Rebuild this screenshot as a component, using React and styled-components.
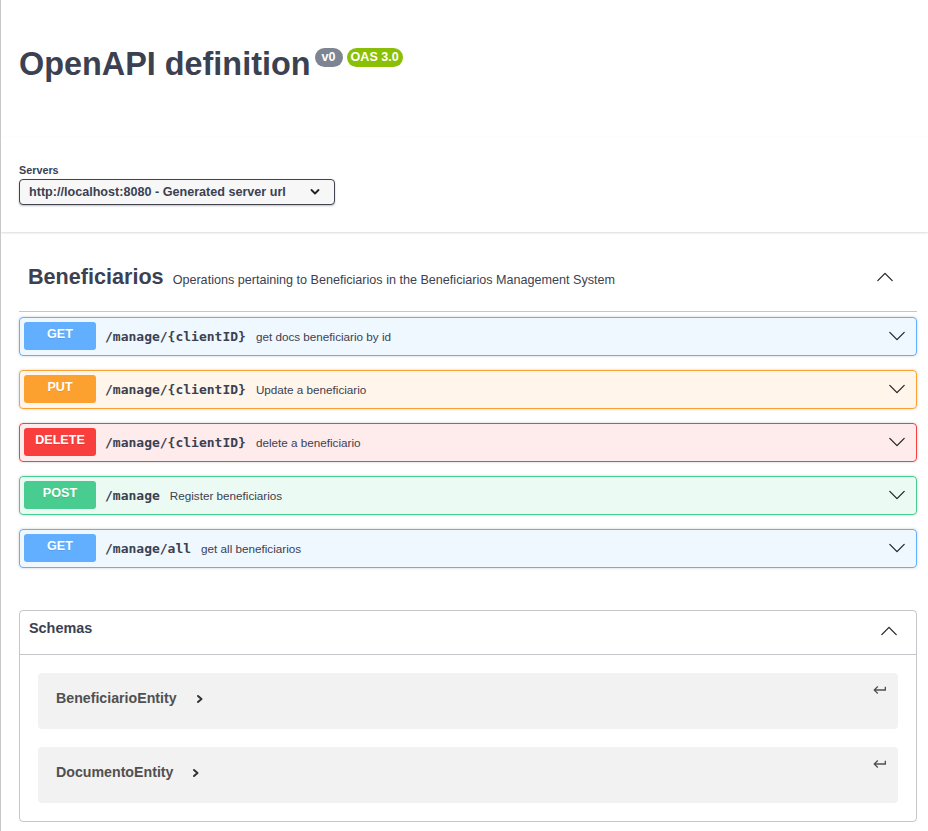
import React from "react";
import styled, { createGlobalStyle } from "styled-components";

const GlobalStyle = createGlobalStyle`
  html, body {
    margin: 0;
    padding: 0;
    background: #fff;
  }
  body {
    font-family: "Liberation Sans", Arial, sans-serif;
    color: #3b4151;
  }
  * {
    box-sizing: border-box;
  }
`;

const METHODS = {
  get: { color: "#61affe", bg: "rgba(97,175,254,.1)" },
  put: { color: "#fca130", bg: "rgba(252,161,48,.1)" },
  delete: { color: "#f93e3e", bg: "rgba(249,62,62,.1)" },
  post: { color: "#49cc90", bg: "rgba(73,204,144,.1)" },
};

const operations = [
  { method: "get", path: "/manage/{clientID}", summary: "get docs beneficiario by id" },
  { method: "put", path: "/manage/{clientID}", summary: "Update a beneficiario" },
  { method: "delete", path: "/manage/{clientID}", summary: "delete a beneficiario" },
  { method: "post", path: "/manage", summary: "Register beneficiarios" },
  { method: "get", path: "/manage/all", summary: "get all beneficiarios" },
];

const schemas = ["BeneficiarioEntity", "DocumentoEntity"];

function Chevron({ up, size = 18, width = 1.4, color = "#222" }) {
  return (
    <svg width={size} height={size} viewBox="0 0 20 20" fill="none">
      <polyline
        points={up ? "2,14 10,6 18,14" : "2,6 10,14 18,6"}
        stroke={color}
        strokeWidth={width}
        strokeLinecap="round"
        strokeLinejoin="round"
      />
    </svg>
  );
}

function JumpIcon() {
  return (
    <svg width="16" height="16" viewBox="0 0 24 24">
      <path
        d="M19 7v4H5.83l3.58-3.59L8 6l-6 6 6 6 1.41-1.41L5.83 13H21V7z"
        fill="#505050"
      />
    </svg>
  );
}

export default function App() {
  return (
    <Page>
      <GlobalStyle />
      <Wrapper>
        <Info>
          <TitleRow>
            <Title>OpenAPI definition</Title>
            <Badges>
              <Badge $wide>v0</Badge>
              <Badge $green>OAS 3.0</Badge>
            </Badges>
          </TitleRow>
        </Info>
      </Wrapper>

      <SchemeContainer>
        <Wrapper>
          <ServersTitle>Servers</ServersTitle>
          <Select>
            <span>http://localhost:8080 - Generated server url</span>
            <SelectArrow>
              <svg width="10" height="8" viewBox="0 0 10 8">
                <polyline
                  points="1.5,2 5,5.5 8.5,2"
                  fill="none"
                  stroke="#222"
                  strokeWidth="1.8"
                  strokeLinecap="round"
                  strokeLinejoin="round"
                />
              </svg>
            </SelectArrow>
          </Select>
        </Wrapper>
      </SchemeContainer>

      <Wrapper>
        <TagSection>
          <TagHeader>
            <TagText>
              <TagName>Beneficiarios</TagName>
              <TagDesc>
                Operations pertaining to Beneficiarios in the Beneficiarios
                Management System
              </TagDesc>
            </TagText>
            <Chevron up />
          </TagHeader>

          <OpList>
            {operations.map((op, i) => (
              <OpBlock key={i} $method={op.method}>
                <Method $method={op.method}>{op.method.toUpperCase()}</Method>
                <OpPath>{op.path}</OpPath>
                <OpSummary>{op.summary}</OpSummary>
                <Chevron />
              </OpBlock>
            ))}
          </OpList>
        </TagSection>

        <Models>
          <ModelsHeader>
            <ModelsTitle>Schemas</ModelsTitle>
            <HeaderArrow>
              <Chevron up />
            </HeaderArrow>
          </ModelsHeader>
          <ModelsBody>
            {schemas.map((name) => (
              <ModelContainer key={name}>
                <ModelName>
                  {name}
                  <Toggle>
                    <svg width="8" height="10" viewBox="0 0 8 10">
                      <polyline
                        points="2,2 5.5,5 2,8"
                        fill="none"
                        stroke="#333"
                        strokeWidth="2"
                        strokeLinecap="round"
                        strokeLinejoin="round"
                      />
                    </svg>
                  </Toggle>
                </ModelName>
                <JumpIcon />
              </ModelContainer>
            ))}
          </ModelsBody>
        </Models>
      </Wrapper>
    </Page>
  );
}

const Page = styled.div`
  min-height: 100vh;
  border-left: 1px solid #c9c9c9;
  overflow: hidden;
`;

const Wrapper = styled.div`
  width: 898px;
  margin-left: 18px;
`;

const Info = styled.div`
  padding: 48px 0 57px;
`;

const TitleRow = styled.div`
  display: flex;
  align-items: flex-start;
`;

const Title = styled.h1`
  margin: 0;
  font-size: 32.4px;
  line-height: 32.4px;
  font-weight: 700;
  color: #3b4151;
`;

const Badges = styled.div`
  display: flex;
  gap: 4px;
  margin-left: 4px;
`;

const Badge = styled.span`
  display: inline-block;
  height: 19px;
  line-height: 19px;
  padding: 0 ${(p) => (p.$wide ? "7px" : "4px")};
  border-radius: 57px;
  background: ${(p) => (p.$green ? "#89bf04" : "#7d8492")};
  color: #fff;
  font-size: 12.6px;
  font-weight: 700;
`;

const SchemeContainer = styled.div`
  padding: 27px 0;
  background: #fff;
  box-shadow: 0 1px 2px 0 rgba(0, 0, 0, 0.15);
`;

const ServersTitle = styled.div`
  font-size: 10.8px;
  line-height: 12px;
  font-weight: 700;
  margin-bottom: 3px;
`;

const Select = styled.div`
  width: 316px;
  height: 26px;
  display: flex;
  align-items: center;
  justify-content: space-between;
  padding: 0 14px 0 9px;
  border: 1px solid #41444e;
  border-radius: 4px;
  background: #f7f7f7;
  box-shadow: 0 1px 2px 0 rgba(0, 0, 0, 0.25);
  font-size: 12.6px;
  font-weight: 700;
  color: #3b4151;
`;

const SelectArrow = styled.span`
  display: flex;
`;

const TagSection = styled.div`
  margin-top: 11px;
`;

const TagHeader = styled.div`
  height: 69px;
  display: flex;
  align-items: center;
  padding: 0 23px 0 9px;
  border-bottom: 1px solid rgba(59, 65, 81, 0.3);
  margin-bottom: 4.5px;
`;

const TagText = styled.div`
  flex: 1;
  display: flex;
  align-items: baseline;
`;

const TagName = styled.span`
  font-size: 21.6px;
  font-weight: 700;
  color: #3b4151;
`;

const TagDesc = styled.span`
  font-size: 12.6px;
  padding: 0 9px;
  color: #3b4151;
`;

const OpList = styled.div`
  display: flex;
  flex-direction: column;
  gap: 14px;
`;

const OpBlock = styled.div`
  display: flex;
  align-items: center;
  padding: 4.5px 10.5px 4.5px 4px;
  border: 1px solid ${(p) => METHODS[p.$method].color};
  border-radius: 4px;
  background: ${(p) => METHODS[p.$method].bg};
  box-shadow: 0 0 3px rgba(0, 0, 0, 0.19);
`;

const Method = styled.span`
  min-width: 72px;
  height: 28px;
  padding-top: 5px;
  line-height: 15px;
  text-align: center;
  font-size: 12.6px;
  font-weight: 700;
  color: #fff;
  border-radius: 3px;
  background: ${(p) => METHODS[p.$method].color};
  text-shadow: 0 1px 0 rgba(0, 0, 0, 0.1);
`;

const OpPath = styled.span`
  font-family: "DejaVu Sans Mono", "Liberation Mono", monospace;
  font-size: 13px;
  font-weight: 700;
  padding: 0 10px 0 9px;
  color: #3b4151;
`;

const OpSummary = styled.span`
  flex: 1;
  font-size: 11.7px;
  color: #3b4151;
`;

const Models = styled.div`
  margin-top: 42px;
  border: 1px solid rgba(59, 65, 81, 0.3);
  border-radius: 4px;
`;

const ModelsHeader = styled.div`
  height: 44px;
  display: flex;
  align-items: flex-start;
  justify-content: space-between;
  padding: 9px 18px 0 9px;
  border-bottom: 1px solid rgba(59, 65, 81, 0.3);
`;

const ModelsTitle = styled.h4`
  margin: 0;
  font-size: 14.4px;
  line-height: 17px;
  font-weight: 700;
  color: #3b4151;
`;

const HeaderArrow = styled.span`
  display: flex;
  margin-top: 2px;
`;

const ModelsBody = styled.div`
  display: flex;
  flex-direction: column;
  gap: 18px;
  padding: 18px;
`;

const ModelContainer = styled.div`
  height: 56px;
  display: flex;
  align-items: flex-start;
  justify-content: space-between;
  padding: 9px 10px 0 18px;
  border-radius: 4px;
  background: rgba(0, 0, 0, 0.05);
`;

const ModelName = styled.span`
  display: inline-flex;
  align-items: center;
  margin-top: 8px;
  font-size: 14.2px;
  line-height: 17px;
  font-weight: 700;
  color: #505050;
`;

const Toggle = styled.span`
  display: flex;
  margin: 2px 0 0 19px;
`;
